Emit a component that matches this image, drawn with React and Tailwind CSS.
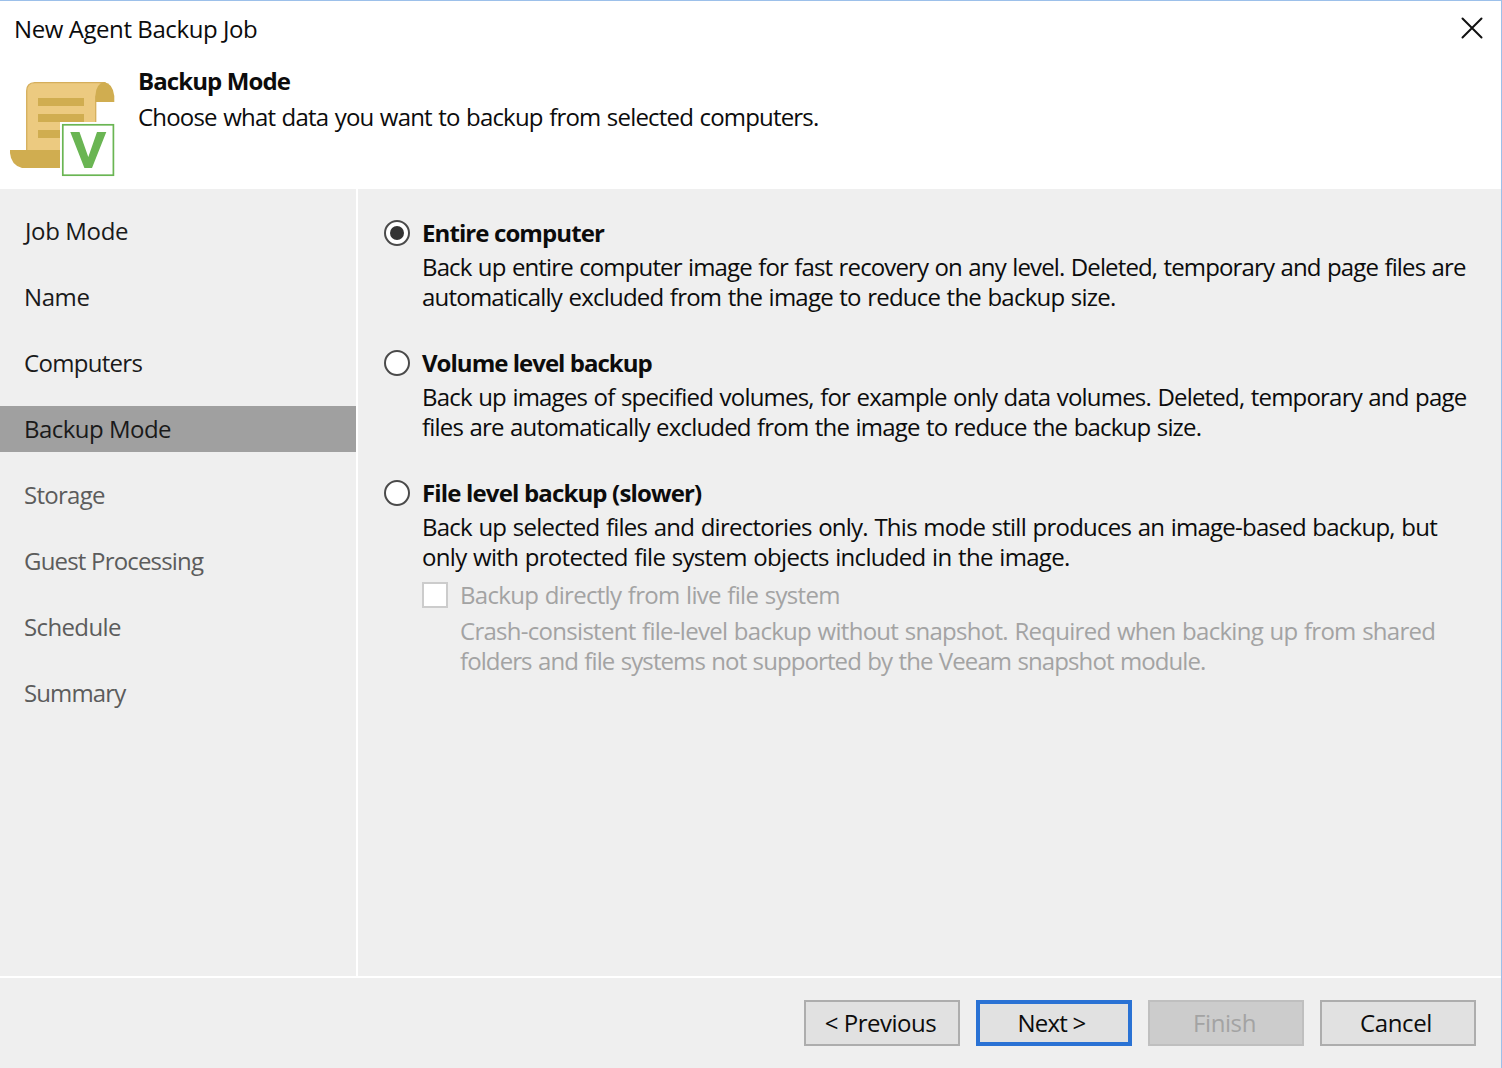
const steps = [
  { label: "Job Mode", tone: "pl-[25px] text-[#1a1a1a] tracking-[-0.36px]" },
  { label: "Name", tone: "pl-[24px] text-[#1a1a1a] tracking-[-0.4px]" },
  { label: "Computers", tone: "pl-[24px] text-[#1a1a1a] tracking-[-0.7px]" },
  { label: "Backup Mode", tone: "pl-[24px] bg-[#a0a0a0] text-[#1a1a1a] tracking-[-0.52px]" },
  { label: "Storage", tone: "pl-[24px] text-[#5c5c5c] tracking-[-0.72px]" },
  { label: "Guest Processing", tone: "pl-[24px] text-[#5c5c5c] tracking-[-0.81px]" },
  { label: "Schedule", tone: "pl-[24px] text-[#5c5c5c] tracking-[-0.62px]" },
  { label: "Summary", tone: "pl-[24px] text-[#5c5c5c] tracking-[-0.88px]" },
];

const modes = [
  {
    title: "Entire computer",
    titleTracking: "tracking-[-0.9px]",
    checked: true,
    lines: [
      ["Back up entire computer image for fast recovery on any level. Deleted, temporary and page files are", "tracking-[-0.865px]"],
      ["automatically excluded from the image to reduce the backup size.", "tracking-[-0.78px]"],
    ],
  },
  {
    title: "Volume level backup",
    titleTracking: "tracking-[-0.98px]",
    checked: false,
    lines: [
      ["Back up images of specified volumes, for example only data volumes. Deleted, temporary and page", "tracking-[-0.802px]"],
      ["files are automatically excluded from the image to reduce the backup size.", "tracking-[-0.815px]"],
    ],
  },
  {
    title: "File level backup (slower)",
    titleTracking: "tracking-[-0.84px]",
    checked: false,
    lines: [
      ["Back up selected files and directories only. This mode still produces an image-based backup, but", "tracking-[-0.754px]"],
      ["only with protected file system objects included in the image.", "tracking-[-0.688px]"],
    ],
  },
];

const buttons = [
  { label: "< Previous", look: "border-2 border-[#adadad] bg-[#e1e1e1] pr-[3px] tracking-[-0.5px]" },
  { label: "Next >", look: "border-4 border-[#2a72d4] bg-[#e1e1e1] pr-[5px] tracking-[-0.8px]" },
  { label: "Finish", look: "border-2 border-[#bfbfbf] bg-[#cccccc] pr-[3px] text-[#a3a3a3] tracking-[-0.4px]", disabled: true },
  { label: "Cancel", look: "border-2 border-[#adadad] bg-[#e1e1e1] pr-[4px] tracking-[-0.4px]" },
];

function JobIcon() {
  return (
    <svg className="mt-[21px] ml-[10px] h-[96px] w-[106px] shrink-0" viewBox="10 81 106 96">
      <path d="M26.700 154V91q0-8 8-8.300h70l-9 14v57z" fill="#ecca80" stroke="#d5ae5b" strokeWidth="1.3" />
      <path d="M95.500 102V95q0.500-11 8.500-13q9 1.500 10.300 14v6z" fill="#d0ad50" />
      <path d="M38 98h46v8H38zM38 114h46v8H38zM38 130h24v8H38z" fill="#d0ad50" />
      <path d="M10 150h54v18H22q-11-3-12-15z" fill="#d0ad50" />
      <rect x="60" y="122" width="56" height="55" fill="#fff" />
      <rect x="62.8" y="124.8" width="50.6" height="50.4" fill="#fff" stroke="#6ab553" strokeWidth="1.7" />
      <path d="M70.300 132h9.200l8.800 25 8.700-25h9.300l-14.300 36h-7.600z" fill="#6ab553" />
    </svg>
  );
}

function Mode({ mode, children }) {
  return (
    <div className="flex h-[130px] items-start">
      <span className="mt-[2px] mr-[12px] flex size-[26px] shrink-0 items-center justify-center rounded-full border-2 border-[#4a4a4a] bg-white">
        {mode.checked && <span className="size-[14px] rounded-full bg-[#333]" />}
      </span>
      <div>
        <h2 className={`mb-[4px] leading-[30px] font-bold ${mode.titleTracking}`}>{mode.title}</h2>
        {mode.lines.map(([text, tracking]) => (
          <p key={text} className={`leading-[30px] [word-spacing:1px] ${tracking}`}>{text}</p>
        ))}
        {children}
      </div>
    </div>
  );
}

export default function App() {
  return (
    <div className="flex h-[1068px] w-[1502px] flex-col overflow-hidden border-t border-r border-[#9cc0ea] bg-[#efefef] font-['Open_Sans',sans-serif] text-[24px] whitespace-nowrap text-[#0c0c0c]">
      <header className="h-[188px] shrink-0 bg-white">
        <div className="flex h-[59px] items-start justify-between pr-[18px] pl-[14px]">
          <span className="mt-[13px] leading-[30px] tracking-[-0.42px]">New Agent Backup Job</span>
          <svg className="mt-[16px] size-[22px]" viewBox="0 0 22 22" fill="none" stroke="#111" strokeWidth="2" strokeLinecap="round">
            <path d="M1.500 1.500l19 19M20.500 1.500l-19 19" />
          </svg>
        </div>
        <div className="flex items-start">
          <JobIcon />
          <div className="ml-[22px] pt-[6px]">
            <h1 className="leading-[30px] font-bold tracking-[-0.9px]">Backup Mode</h1>
            <p className="mt-[6px] leading-[30px] tracking-[-0.81px] [word-spacing:1px]">Choose what data you want to backup from selected computers.</p>
          </div>
        </div>
      </header>

      <div className="flex h-[787px] shrink-0">
        <nav className="flex w-[358px] shrink-0 flex-col gap-5 border-r-2 border-white pt-[19px]">
          {steps.map((s) => (
            <div key={s.label} className={`h-[46px] leading-[46px] ${s.tone}`}>{s.label}</div>
          ))}
        </nav>
        <main className="pt-[29px] pl-[26px]">
          {modes.map((m, i) => (
            <Mode key={m.title} mode={m}>
              {i === 2 && (
                <div className="mt-[8px] flex items-start text-[#a3a3a3] [word-spacing:1px]">
                  <span className="mt-[2px] size-[26px] shrink-0 border-2 border-[#cccccc] bg-white" />
                  <div className="ml-[12px]">
                    <p className="leading-[30px] tracking-[-0.7px]">Backup directly from live file system</p>
                    <p className="mt-[6px] leading-[30px] tracking-[-0.718px]">
                      Crash-consistent file-level backup without snapshot. Required when backing up from shared
                    </p>
                    <p className="leading-[30px] tracking-[-0.905px]">folders and file systems not supported by the Veeam snapshot module.</p>
                  </div>
                </div>
              )}
            </Mode>
          ))}
        </main>
      </div>

      <footer className="flex flex-1 items-start justify-end gap-4 border-t-2 border-white pt-[22px] pr-[25px]">
        {buttons.map((b) => (
          <button key={b.label} disabled={b.disabled} className={`flex h-[46px] w-[156px] items-center justify-center leading-[30px] ${b.look}`}>
            {b.label}
          </button>
        ))}
      </footer>
    </div>
  );
}
